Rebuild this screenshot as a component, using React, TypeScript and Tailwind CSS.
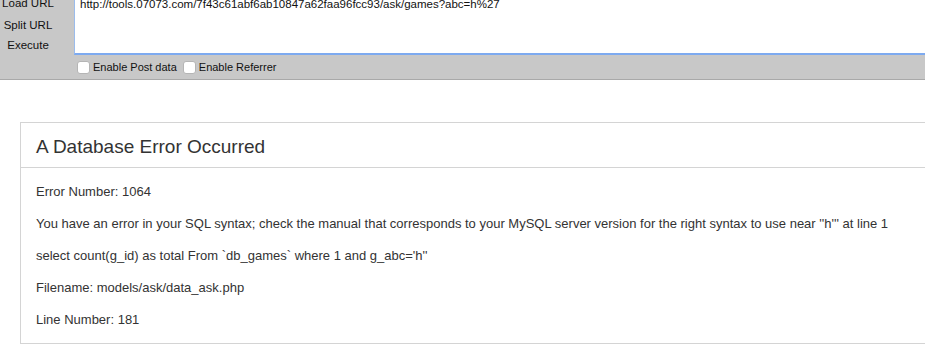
export default function App() {
  return (
    <div className="w-[925px] h-[348px] overflow-hidden bg-white font-['Liberation_Sans',Arial,sans-serif] text-[#222]">
      {/* toolbar, scrolled so its top is cut off */}
      <div className="-mt-[12px] bg-[#c8c8c8] border-b border-[#a9a9a9]">
        <div className="flex h-[67px]">
          <div className="w-[56px] pt-[5px] flex flex-col text-[11.5px] text-[#111]">
            <div className="h-[22px] flex items-center justify-center">Load URL</div>
            <div className="h-[22px] flex items-center justify-center">Split URL</div>
            <div className="h-[18px] flex items-center justify-center">Execute</div>
          </div>
          <div className="ml-[18px] flex-1 h-[67px] bg-white border-l border-[#9bbcec] border-b-2 border-b-[#7daaf0] pl-[5px] pt-[9px] text-[11.5px] leading-[14px] text-[#111]">
            http://tools.07073.com/7f43c61abf6ab10847a62faa96fcc93/ask/games?abc=h%27
          </div>
        </div>
        <div className="h-[24px] flex items-center pl-[77px] text-[11px] text-[#111]">
          <label className="flex items-center gap-[3px]">
            <span className="w-[13px] h-[13px] rounded-[3px] bg-white border border-[#b5b5b5]" />
            Enable Post data
          </label>
          <label className="ml-[6px] flex items-center gap-[3px]">
            <span className="w-[13px] h-[13px] rounded-[3px] bg-white border border-[#b5b5b5]" />
            Enable Referrer
          </label>
        </div>
      </div>

      {/* error panel */}
      <div className="mt-[42px] ml-[20px] w-[960px] border border-[#d4d4d4]">
        <div className="px-[15px] pt-[13px] pb-[9px] border-b border-[#d4d4d4]">
          <h1 className="text-[19px] leading-[22px] text-[#333]">A Database Error Occurred</h1>
        </div>
        <div className="px-[15px] pt-[15px] pb-[14px] flex flex-col gap-[14px] text-[13px] leading-[18px] text-[#333]">
          <p>Error Number: 1064</p>
          <p>
            You have an error in your SQL syntax; check the manual that corresponds to your MySQL server version for the right syntax to use near ''h''' at line 1
          </p>
          <p>select count(g_id) as total From `db_games` where 1 and g_abc='h''</p>
          <p>Filename: models/ask/data_ask.php</p>
          <p>Line Number: 181</p>
        </div>
      </div>
    </div>
  );
}
